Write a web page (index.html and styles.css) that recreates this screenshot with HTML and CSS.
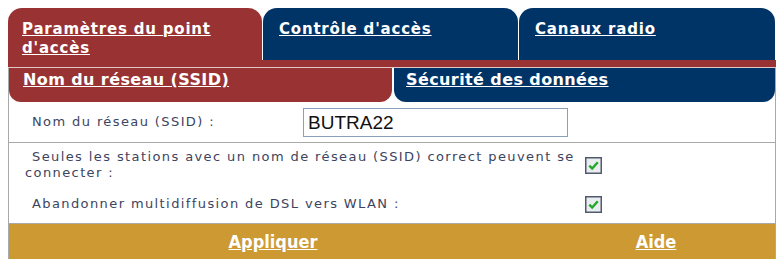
FILE: index.html
```html
<!DOCTYPE html>
<html lang="fr">
<head>
<meta charset="utf-8">
<link rel="stylesheet" href="styles.css">
</head>
<body>
<div class="panel">
  <div class="tabs">
    <div class="tab tab-active"><a href="#">Paramètres du point<br>d'accès</a></div>
    <div class="tab tab-blue"><a href="#">Contrôle d'accès</a></div>
    <div class="tab tab-blue tab-last"><a href="#">Canaux radio</a></div>
  </div>
  <div class="strip"></div>
  <div class="subbox">
    <div class="subtabs">
      <div class="subtab sub-active"><a href="#">Nom du réseau (SSID)</a></div>
      <div class="subtab sub-blue"><a href="#">Sécurité des données</a></div>
    </div>
    <div class="content">
      <div class="row-ssid">
        <div class="label label-ssid">Nom du réseau (SSID) :</div>
        <input class="text" type="text" value="BUTRA22">
      </div>
      <div class="opts">
        <div class="opt opt-first">
          <div class="label wide">Seules les stations avec un nom de réseau (SSID) correct peuvent se connecter :</div>
          <span class="cb"><svg viewBox="0 0 17 17" width="17" height="17"><rect x="0.75" y="0.75" width="15.5" height="15.5" fill="#e9edf0" stroke="#505a6e" stroke-width="1.5"/><path d="M4.3 8.6 L7.2 11.6 L12.8 5.3" fill="none" stroke="#23a829" stroke-width="2.4"/></svg></span>
        </div>
        <div class="opt">
          <div class="label wide">Abandonner multidiffusion de DSL vers WLAN :</div>
          <span class="cb"><svg viewBox="0 0 17 17" width="17" height="17"><rect x="0.75" y="0.75" width="15.5" height="15.5" fill="#e9edf0" stroke="#505a6e" stroke-width="1.5"/><path d="M4.3 8.6 L7.2 11.6 L12.8 5.3" fill="none" stroke="#23a829" stroke-width="2.4"/></svg></span>
        </div>
      </div>
    </div>
    <div class="footer">
      <div class="fcol fcol-main"><a href="#">Appliquer</a></div>
      <div class="fcol fcol-help"><a href="#">Aide</a></div>
    </div>
  </div>
</div>
</body>
</html>
```

FILE: styles.css
```css
html, body {
  margin: 0;
  padding: 0;
  background: #ffffff;
}
body {
  padding: 8px;
  font-family: "DejaVu Sans", Verdana, sans-serif;
}
.panel {
  width: 768px;
}
.tabs {
  display: flex;
  gap: 1px;
  height: 52px;
}
.tab {
  box-sizing: border-box;
  border-radius: 14px 14px 0 0;
  padding: 12px 0 0 14px;
  font-weight: bold;
  font-size: 15px;
  line-height: 19px;
  letter-spacing: 0.8px;
}
.tab a, .subtab a, .footer a {
  color: #ffffff;
  text-decoration: underline;
}
.tab-active {
  width: 254px;
  background: #993333;
}
.tab-blue {
  width: 255px;
  padding-left: 16px;
  background: #003366;
}
.tab-last {
  width: 256px;
}
.strip {
  height: 7px;
  background: #993333;
  border-bottom: 1px solid #e2c6c6;
}
.subbox {
  border-left: 1px solid #a9a9a9;
  border-right: 1px solid #a9a9a9;
}
.subtabs {
  display: flex;
  gap: 2px;
  height: 34px;
}
.subtab {
  box-sizing: border-box;
  border-radius: 0 0 12px 12px;
  padding: 3px 0 0 14px;
  font-weight: bold;
  font-size: 16px;
  line-height: 18px;
  letter-spacing: 0.4px;
}
.sub-active {
  width: 383px;
  background: #993333;
}
.sub-blue {
  flex: 1;
  padding-left: 12px;
  background: #003366;
}
.content {
  border-bottom: 1px solid #a9a9a9;
  font-size: 13px;
  letter-spacing: 1.4px;
  color: #3d4460;
}
.row-ssid {
  display: flex;
  align-items: center;
  height: 40px;
  border-bottom: 1px solid #a9a9a9;
}
.label {
  box-sizing: border-box;
  padding-left: 16px;
  text-indent: 7px;
  line-height: 16px;
}
.label-ssid {
  width: 294px;
}
.text {
  box-sizing: border-box;
  width: 265px;
  height: 29px;
  margin: 1px 0 0;
  border: 1px solid #8aa0b8;
  padding: 1px 4px 0;
  font-family: "Liberation Sans", Arial, sans-serif;
  font-size: 19px;
  letter-spacing: 0;
  color: #111111;
  background: #ffffff;
  outline: none;
}
.opts {
  padding: 6px 0 10px;
}
.opt {
  display: flex;
  align-items: center;
}
.opt-first {
  margin-bottom: 14px;
}
.wide {
  width: 576px;
}
.cb {
  display: block;
  width: 17px;
  height: 17px;
  margin-top: 1px;
}
.cb svg {
  display: block;
}
.footer {
  display: flex;
  height: 35px;
  background: #cc9933;
  align-items: center;
  font-family: "DejaVu Sans Condensed", "DejaVu Sans", sans-serif;
  font-stretch: condensed;
  font-weight: bold;
  font-size: 18px;
}
.fcol {
  text-align: center;
}
.fcol-main {
  width: 528px;
}
.fcol-help {
  width: 238px;
}
```
